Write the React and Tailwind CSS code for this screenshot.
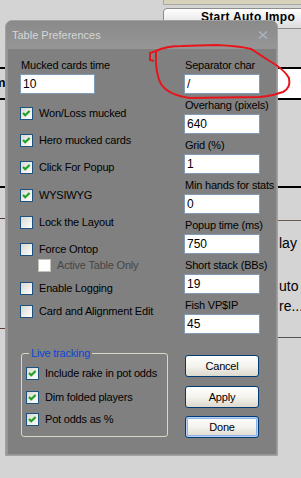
import React from "react";

const txt = "text-[11px] leading-[13px] tracking-[-0.2px] whitespace-nowrap";

const Checkbox = ({ checked, label, disabled, className = "" }) => (
    <div className={`flex h-[13px] items-center ${className}`}>
        <span
            className={`block h-[13px] w-[13px] shrink-0 border ${
                disabled
                    ? "border-[#c4c2b8] bg-white"
                    : "border-[#1c5180] bg-gradient-to-br from-[#d8d8d2] to-white"
            }`}
        >
            {checked && (
                <svg width="11" height="11" viewBox="0 0 11 11" className="block">
                    <path d="M2 5 L4.2 7.3 L8.6 2.9" fill="none" stroke="#21a121" strokeWidth="2.1" />
                </svg>
            )}
        </span>
        <span className={`ml-[6px] ${txt} ${disabled ? "text-[#464646]" : "text-black"}`}>{label}</span>
    </div>
);

const Field = ({ label, value, className = "", w = "w-[76px]" }) => (
    <div className={className}>
        <div className={`pl-[1px] ${txt} text-black`}>{label}</div>
        <input
            readOnly
            defaultValue={value}
            className={`mt-[2px] block h-[20px] ${w} border border-[#7f9db9] bg-white px-[2px] text-[12px] text-black outline-none`}
        />
    </div>
);

const Btn = ({ children, focus, className = "" }) => (
    <button
        className={`ml-[1px] block h-[22px] w-[74px] rounded-[3px] border border-[#003c74] bg-gradient-to-b from-white via-[#f4f3ee] to-[#dcd8cc] text-[11px] tracking-[-0.2px] text-black ${
            focus ? "shadow-[inset_0_0_0_1px_#b9d1f6,inset_0_0_0_2px_#8fb0ea]" : ""
        } ${className}`}
    >
        {children}
    </button>
);

// strip of the main app that peeks out around the dialog
const Backdrop = () => (
    <div className="flex h-full flex-col">
        <div className="ml-[163px] h-[5px] border-b border-l border-[#a8a8a0] bg-[#d6d3ba]" />
        <div className="ml-[163px] mr-[-30px] mt-[3px] h-[21px] rounded-[4px] border border-[#8d8d8d] bg-gradient-to-b from-white to-[#dcdcdc] pl-[37px] pt-[1px] text-[12px] font-bold leading-[14px] tracking-[0.3px] text-black whitespace-nowrap">
            Start Auto Impo
        </div>
        <div className="mt-[38px] h-[2px] bg-black" />
        <div className="flex h-[29px] items-start justify-between">
            <span className="ml-[-6px] mt-[7px] text-[13px] font-bold leading-[14px]">m</span>
            <div className="h-full w-[24px] bg-white" />
        </div>
        <div className="h-[2px] bg-black" />
        <div className="mt-[86px] h-[2px] bg-black" />
        <div className="mt-[30px] flex h-[3px] justify-between">
            <div className="h-[1px] w-[6px] self-start bg-[#4e3a30]" />
            <div className="h-[1px] w-[24px] self-end bg-[#6a5a50]" />
        </div>
        <div className="flex flex-col pl-[279px] pt-[14px] text-[14px] leading-[16px] whitespace-nowrap text-black">
            <span>lay de</span>
            <span className="mt-[27px]">uto</span>
            <span className="mt-[4px]">re...</span>
        </div>
        <div className="mt-[14px] flex h-[10px] justify-between">
            <div className="h-[1px] w-[6px] self-start bg-[#5c4036]" />
            <div className="h-[1px] w-[24px] self-end bg-[#555]" />
        </div>
    </div>
);

export default function App() {
    return (
        <div className="relative h-[478px] w-[301px] overflow-hidden bg-[#d4d4d4] font-['Liberation_Sans',Arial,sans-serif]">
            <Backdrop />

            {/* dialog window */}
            <div className="absolute left-[5px] top-[20px] flex h-[436px] w-[273px] flex-col rounded-t-[7px] border border-[#a2a2a2] bg-[#959595]">
                <div className="flex h-[28px] shrink-0 items-center justify-between rounded-t-[6px] bg-gradient-to-b from-[#8a8a8a] to-[#969696] pl-[6px] pr-[9px]">
                    <span className="text-[11px] leading-[13px] text-[#d6d6d6]">Table Preferences</span>
                    <svg width="10" height="8" viewBox="0 0 10 8">
                        <path d="M1 0.5 L9 7.5 M9 0.5 L1 7.5" stroke="#aab2c0" strokeWidth="1.6" />
                    </svg>
                </div>

                <div className="mb-[1px] ml-[2px] mr-[1px] flex flex-1 bg-[#808080] pl-[12px] pt-[10px]">
                    {/* left column */}
                    <div className="w-[164px] shrink-0">
                        <Field label="Mucked cards time" value="10" w="w-[75px]" />
                        <Checkbox checked label="Won/Loss mucked" className="mt-[13px]" />
                        <Checkbox checked label="Hero mucked cards" className="mt-[14px]" />
                        <Checkbox checked label="Click For Popup" className="mt-[14px]" />
                        <Checkbox checked label="WYSIWYG" className="mt-[15px]" />
                        <Checkbox label="Lock the Layout" className="mt-[14px]" />
                        <Checkbox label="Force Ontop" className="mt-[14px]" />
                        <Checkbox disabled label="Active Table Only" className="ml-[18px] mt-[3px]" />
                        <Checkbox label="Enable Logging" className="mt-[10px]" />
                        <Checkbox label="Card and Alignment Edit" className="mt-[10px]" />

                        <fieldset className="ml-[1px] mt-[29px] w-[147px] rounded-[3px] border border-[#d8d6c4] pb-[10px] pl-[4px]">
                            <legend className={`ml-[3px] px-[2px] ${txt} text-[#0b46d8]`}>Live tracking</legend>
                            <Checkbox checked label="Include rake in pot odds" className="mt-[7px]" />
                            <Checkbox checked label="Dim folded players" className="mt-[11px]" />
                            <Checkbox checked label="Pot odds as %" className="mt-[9px]" />
                        </fieldset>
                    </div>

                    {/* right column */}
                    <div>
                        <Field label="Separator char" value="/" />
                        <Field label="Overhang (pixels)" value="640" className="mt-[5px]" />
                        <Field label="Grid (%)" value="1" className="mt-[5px]" />
                        <Field label="Min hands for stats" value="0" className="mt-[5px]" />
                        <Field label="Popup time (ms)" value="750" className="mt-[5px]" />
                        <Field label="Short stack (BBs)" value="19" className="mt-[5px]" />
                        <Field label="Fish VP$IP" value="45" className="mt-[5px]" />
                        <Btn className="mt-[21px]">Cancel</Btn>
                        <Btn className="mt-[9px]">Apply</Btn>
                        <Btn focus className="mt-[8px]">Done</Btn>
                    </div>
                </div>
            </div>

            {/* red hand-drawn annotation */}
            <svg className="pointer-events-none absolute left-0 top-0" width="301" height="478" viewBox="0 0 301 478">
                <path
                    d="M154 61 L150 60 L150 53 L156 51 Q166 46 182 46 L216 45 Q240 46 251 49 L268 60 Q284 69 289 78 Q291 88 283 92 Q272 96 260 97 L190 98 Q168 95 161 84 Q155 73 156 52"
                    fill="none"
                    stroke="#e8141c"
                    strokeWidth="2"
                />
            </svg>
        </div>
    );
}
